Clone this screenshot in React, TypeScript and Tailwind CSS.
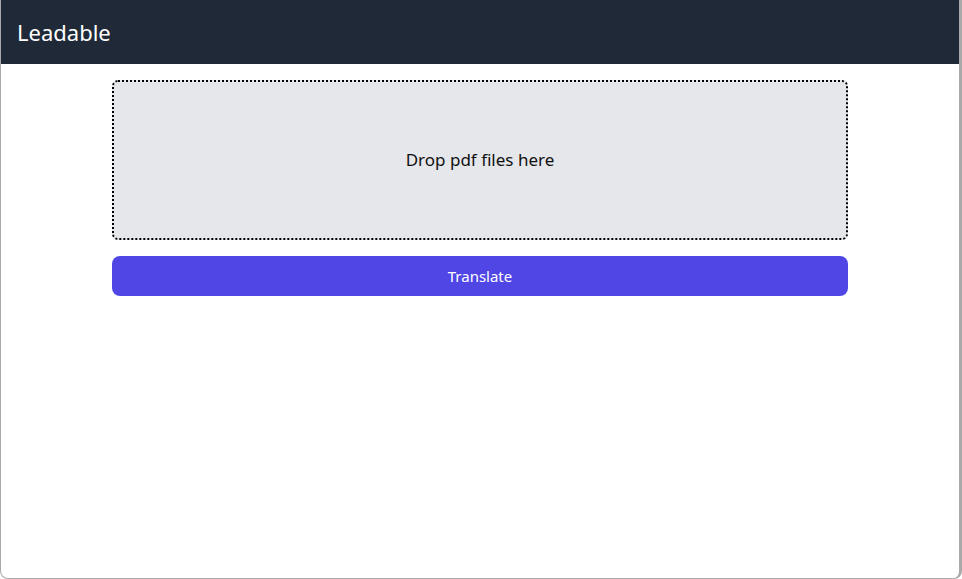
export default function App() {
  return (
    <div className="h-[579px] w-[962px] overflow-hidden bg-white font-['Segoe_UI','Noto_Sans',sans-serif]">
      <div className="flex h-full w-full flex-col overflow-hidden rounded-b-[8px] border-b border-l border-r-[3px] border-[#a9a9a9] bg-white">
        <header className="flex h-[64px] shrink-0 items-center bg-[#1f2937] px-[16px]">
          <h1 className="text-[22px] leading-none text-white">Leadable</h1>
        </header>
        <main className="mx-auto w-full max-w-3xl px-4 pt-4">
          <div className="flex h-[160px] items-center justify-center rounded-md border-2 border-dotted border-black bg-[#e5e7eb]">
            <p className="text-[17px] text-[#111]">Drop pdf files here</p>
          </div>
          <button
            type="button"
            className="mt-4 flex h-[40px] w-full items-center justify-center rounded-lg bg-[#4f46e5] text-[15px] text-white"
          >
            Translate
          </button>
        </main>
      </div>
    </div>
  );
}
